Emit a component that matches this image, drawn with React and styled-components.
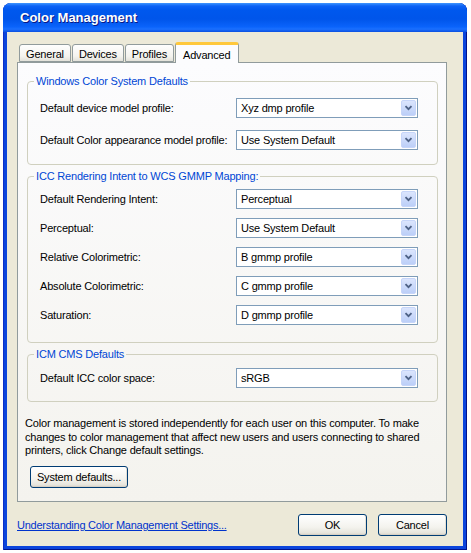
import styled, { createGlobalStyle } from "styled-components";

const GlobalStyle = createGlobalStyle`
  html, body {
    margin: 0;
    padding: 0;
    background: #fff;
  }
  body {
    font-family: "Liberation Sans", Arial, sans-serif;
    font-size: 11px;
    letter-spacing: -0.18px;
    color: #000;
  }
  * {
    box-sizing: border-box;
  }
`;

const Window = styled.div`
  margin: 3px 0 0 3px;
  width: 464px;
  height: 547px;
  display: flex;
  flex-direction: column;
  background: #0b45dc;
  border-radius: 8px 8px 0 0;
  overflow: hidden;
  box-shadow: inset 1px 0 #0a2fc8, inset -1px 0 #00138c, inset 0 -1px #00138c;
`;

const TitleBar = styled.div`
  height: 29px;
  flex: none;
  display: flex;
  align-items: center;
  padding: 0 0 1px 17px;
  background: linear-gradient(
    #3f96ff 0,
    #0d62f5 3px,
    #0058ee 7px,
    #0055ea 55%,
    #0a63fb 82%,
    #1a70ff 90%,
    #0a4fe0 100%
  );
  color: #fff;
  font-weight: bold;
  font-size: 13px;
  letter-spacing: 0;
  text-shadow: 1px 1px #0a1883;
`;

const Body = styled.div`
  flex: 1;
  margin: 0 4px 4px;
  background: #ece9d8;
  padding: 10px 16px 10px 10px;
  display: flex;
  flex-direction: column;
`;

const TabStrip = styled.div`
  height: 20px;
  display: flex;
  align-items: flex-end;
  padding-left: 2px;
  position: relative;
  z-index: 1;
`;

const Tab = styled.div`
  height: ${(p) => (p.$active ? "21px" : "18px")};
  margin-bottom: ${(p) => (p.$active ? "-1px" : "0")};
  margin-left: 1px;
  padding: 1px ${(p) => (p.$active ? "7px" : "6px")} 0;
  display: flex;
  align-items: center;
  border: 1px solid #919b9c;
  border-bottom: ${(p) => (p.$active ? "none" : "1px solid #919b9c")};
  border-top: ${(p) => (p.$active ? "3px solid #ffc83c" : "1px solid #919b9c")};
  border-radius: 3px 3px 0 0;
  background: ${(p) =>
    p.$active
      ? "#fcfcfe"
      : "linear-gradient(#fefefe, #f4f3ee 70%, #e3e2da)"};
  &:first-child {
    margin-left: 0;
  }
`;

const Panel = styled.div`
  height: 440px;
  flex: none;
  border: 1px solid #919b9c;
  background: linear-gradient(#fcfcfe, #f4f3ee);
  padding: 12px 8px 0 7px;
  display: flex;
  flex-direction: column;
`;

const Group = styled.fieldset`
  margin: ${(p) => p.$mt || 0}px 0 0 2px;
  padding: ${(p) => p.$pt}px 0 ${(p) => p.$pb}px 6px;
  border: 1px solid #d0d0bf;
  border-radius: 4px;
  min-width: 0;
`;

const Legend = styled.legend`
  padding: 0 2px;
  line-height: 13px;
  color: #0046d5;
`;

const Rows = styled.div`
  display: flex;
  flex-direction: column;
  gap: ${(p) => p.$gap}px;
  padding-left: 6px;
`;

const Row = styled.div`
  display: grid;
  grid-template-columns: 196px 182px;
  align-items: center;
  height: 20px;
`;

const Label = styled.span`
  white-space: nowrap;
`;

const Combo = styled.div`
  height: 20px;
  border: 1px solid #7f9db9;
  background: #fff;
  display: flex;
  align-items: center;
  justify-content: space-between;
  padding: 0 1px 0 4px;
`;

const DropButton = styled.div`
  width: 15px;
  height: 16px;
  border: 1px solid #c6d5f9;
  border-radius: 2px;
  background: linear-gradient(#dbe5fd, #bccff8);
  display: flex;
  align-items: center;
  justify-content: center;
`;

const Note = styled.p`
  margin: 15px 0 0 0;
  line-height: 13.5px;
  padding-right: 2px;
`;

const Button = styled.button`
  font: inherit;
  letter-spacing: inherit;
  color: #000;
  height: 22px;
  width: ${(p) => p.$w}px;
  border: 1px solid #003c74;
  border-radius: 3px;
  background: linear-gradient(#ffffff, #f4f3ee 60%, #e6e4dc 90%, #d6d0c5);
  box-shadow: inset 0 -1px #d6d0c5, inset -1px 0 #e3e0d6;
  padding: 0;
`;

const SystemButton = styled(Button)`
  margin: 8px 0 0 5px;
  align-self: flex-start;
`;

const Footer = styled.div`
  margin-top: 12px;
  height: 22px;
  display: flex;
  align-items: center;
  justify-content: space-between;
`;

const HelpLink = styled.a`
  color: #0033cc;
  text-decoration: underline;
  letter-spacing: -0.25px;
  cursor: pointer;
`;

const ButtonBar = styled.div`
  display: flex;
  gap: 11px;
`;

function Chevron() {
  return (
    <svg width="9" height="6" viewBox="0 0 9 6">
      <path d="M1.5 1.2 L4.5 4.2 L7.5 1.2" fill="none" stroke="#4d6185" strokeWidth="1.8" />
    </svg>
  );
}

function Select({ value }) {
  return (
    <Combo>
      <span>{value}</span>
      <DropButton>
        <Chevron />
      </DropButton>
    </Combo>
  );
}

const wcs = [
  ["Default device model profile:", "Xyz dmp profile"],
  ["Default Color appearance model profile:", "Use System Default"],
];

const icc = [
  ["Default Rendering Intent:", "Perceptual"],
  ["Perceptual:", "Use System Default"],
  ["Relative Colorimetric:", "B gmmp profile"],
  ["Absolute Colorimetric:", "C gmmp profile"],
  ["Saturation:", "D gmmp profile"],
];

const tabs = ["General", "Devices", "Profiles", "Advanced"];

export default function App() {
  return (
    <>
      <GlobalStyle />
      <Window>
        <TitleBar>Color Management</TitleBar>
        <Body>
          <TabStrip>
            {tabs.map((t) => (
              <Tab key={t} $active={t === "Advanced"}>
                {t}
              </Tab>
            ))}
          </TabStrip>
          <Panel>
            <Group $pt={10} $pb={14}>
              <Legend>Windows Color System Defaults</Legend>
              <Rows $gap={12}>
                {wcs.map(([label, value]) => (
                  <Row key={label}>
                    <Label>{label}</Label>
                    <Select value={value} />
                  </Row>
                ))}
              </Rows>
            </Group>
            <Group $mt={5} $pt={6} $pb={17}>
              <Legend>ICC Rendering Intent to WCS GMMP Mapping:</Legend>
              <Rows $gap={9}>
                {icc.map(([label, value]) => (
                  <Row key={label}>
                    <Label>{label}</Label>
                    <Select value={value} />
                  </Row>
                ))}
              </Rows>
            </Group>
            <Group $mt={5} $pt={7} $pb={13}>
              <Legend>ICM CMS Defaults</Legend>
              <Rows $gap={0}>
                <Row>
                  <Label>Default ICC color space:</Label>
                  <Select value="sRGB" />
                </Row>
              </Rows>
            </Group>
            <Note>
              Color management is stored independently for each user on this
              computer. To make changes to color management that affect new
              users and users connecting to shared printers, click Change
              default settings.
            </Note>
            <SystemButton $w={98}>System defaults...</SystemButton>
          </Panel>
          <Footer>
            <HelpLink>Understanding Color Management Settings...</HelpLink>
            <ButtonBar>
              <Button $w={69}>OK</Button>
              <Button $w={69}>Cancel</Button>
            </ButtonBar>
          </Footer>
        </Body>
      </Window>
    </>
  );
}
